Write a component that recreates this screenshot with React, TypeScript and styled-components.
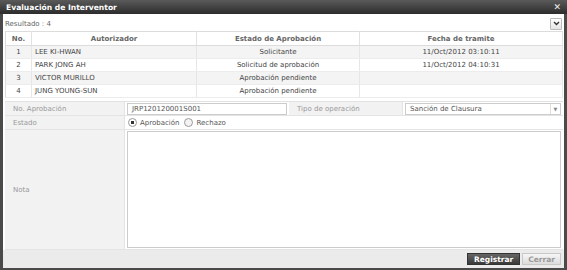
import React from 'react';
import styled, {createGlobalStyle} from 'styled-components';

const GlobalStyle = createGlobalStyle`
  html, body { margin: 0; padding: 0; background: #fff; }
  body { font-family: "DejaVu Sans", Verdana, sans-serif; font-size: 7px; color: #444; }
  * { box-sizing: border-box; }
`;

const Dialog = styled.div`
  width: 567px;
  height: 270px;
  display: flex;
  flex-direction: column;
  background: #fff;
  border: solid #4a4a4a;
  border-width: 0 3px 2px 3px;
`;

const TitleBar = styled.div`
  height: 14px;
  margin: 0 -3px;
  padding: 0 6px;
  display: flex;
  align-items: center;
  justify-content: space-between;
  background: linear-gradient(#5a5a5a, #2c2c2c);
  color: #fff;
  font-weight: bold;
  font-size: 7.6px;
`;

const Close = styled.span`
  font-size: 9px;
  font-weight: bold;
  line-height: 1;
  color: #eee;
`;

const Body = styled.div`
  flex: 1;
  padding: 2px 2px 0 1px;
  display: flex;
  flex-direction: column;
`;

const ResultBar = styled.div`
  height: 15px;
  display: flex;
  align-items: center;
  justify-content: space-between;
  color: #666;
  padding-left: 1px;
`;

const IconButton = styled.span`
  width: 12px;
  height: 12px;
  border: 1px solid #bbb;
  border-radius: 1px;
  background: linear-gradient(#fff, #e4e4e4);
  display: flex;
  align-items: center;
  justify-content: center;
`;

const Table = styled.table`
  width: 558px;
  margin-left: 1px;
  border-collapse: collapse;
  border: 1px solid #dcdcdc;
  table-layout: fixed;
`;

const Th = styled.th<{w?: number}>`
  width: ${p => (p.w ? p.w + 'px' : 'auto')};
  height: 14px;
  padding: 0;
  font-weight: bold;
  color: #666;
  border-right: 1px solid #e2e2e2;
  border-bottom: 1px solid #dcdcdc;
  background: #fff;
`;

const Tr = styled.tr<{alt?: boolean}>`
  background: ${p => (p.alt ? '#f4f4f4' : '#fff')};
`;

const Td = styled.td<{align?: string}>`
  height: 13px;
  padding: 0 3px;
  text-align: ${p => p.align || 'center'};
  color: #444;
  border-right: 1px solid #e6e6e6;
  border-bottom: 1px solid #ececec;
  white-space: nowrap;
`;

const Form = styled.div`
  margin: 3px 0 0 1px;
  width: 558px;
  flex: 1;
  display: grid;
  grid-template-columns: 120px 164px 114px 160px;
  grid-template-rows: 14px 14px 1fr;
  border-top: 1px solid #e2e2e2;
`;

const Label = styled.div`
  background: #f2f2f2;
  color: #999;
  display: flex;
  align-items: center;
  padding-left: 8px;
  border-bottom: 1px solid #e4e4e4;
  border-right: 1px solid #e4e4e4;
`;

const Cell = styled.div<{span?: number}>`
  grid-column: span ${p => p.span || 1};
  display: flex;
  align-items: center;
  padding: 1px 2px;
  border-bottom: 1px solid #e4e4e4;
`;

const Input = styled.div`
  flex: 1;
  height: 12px;
  border: 1px solid #ccc;
  background: #fff;
  color: #555;
  padding-left: 4px;
  display: flex;
  align-items: center;
`;

const Select = styled(Input)`
  justify-content: space-between;
  padding-right: 0;
`;

const SelectArrow = styled.span`
  width: 10px;
  height: 10px;
  display: flex;
  align-items: center;
  justify-content: center;
  border-left: 1px solid #ddd;
  color: #888;
  font-size: 5px;
`;

const Radio = styled.label<{checked?: boolean}>`
  display: flex;
  align-items: center;
  gap: 3px;
  margin-left: 1px;
  margin-right: 4px;
  color: #555;
  &::before {
    content: '';
    width: 7px;
    height: 7px;
    border-radius: 50%;
    border: 1px solid #999;
    background: ${p => (p.checked ? 'radial-gradient(#333 0 1.6px, #fff 2px)' : '#f4f4f4')};
  }
`;

const TextArea = styled.div`
  width: 100%;
  height: 100%;
  border: 1px solid #ccc;
  background: #fff;
`;

const Footer = styled.div`
  height: 18px;
  margin: 0 -2px 0 -1px;
  background: #ebebeb;
  display: flex;
  align-items: center;
  justify-content: flex-end;
  gap: 2px;
  padding-right: 3px;
`;

const Button = styled.span<{primary?: boolean}>`
  height: 12px;
  padding: 0 ${p => (p.primary ? 6 : 5)}px;
  display: flex;
  align-items: center;
  font-weight: bold;
  font-size: 7.5px;
  border: 1px solid ${p => (p.primary ? '#333' : '#c8c8c8')};
  background: ${p => (p.primary ? 'linear-gradient(#666, #3a3a3a)' : 'linear-gradient(#f6f6f6, #dcdcdc)')};
  color: ${p => (p.primary ? '#fff' : '#999')};
`;

const rows = [
  {no: 1, name: 'LEE KI-HWAN', estado: 'Solicitante', fecha: '11/Oct/2012 03:10:11'},
  {no: 2, name: 'PARK JONG AH', estado: 'Solicitud de aprobación', fecha: '11/Oct/2012 04:10:31'},
  {no: 3, name: 'VICTOR MURILLO', estado: 'Aprobación pendiente', fecha: ''},
  {no: 4, name: 'JUNG YOUNG-SUN', estado: 'Aprobación pendiente', fecha: ''},
];

export default function App() {
  return (
    <>
      <GlobalStyle/>
      <Dialog>
        <TitleBar>
          <span>Evaluación de Interventor</span>
          <Close>✕</Close>
        </TitleBar>
        <Body>
          <ResultBar>
            <span>Resultado : 4</span>
            <IconButton>
              <svg width="7" height="5" viewBox="0 0 7 5">
                <path d="M1 1 L3.5 3.5 L6 1" stroke="#333" strokeWidth="1.4" fill="none"/>
              </svg>
            </IconButton>
          </ResultBar>
          <Table>
            <thead>
              <tr>
                <Th w={26}>No.</Th>
                <Th w={165}>Autorizador</Th>
                <Th w={163}>Estado de Aprobación</Th>
                <Th>Fecha de tramite</Th>
              </tr>
            </thead>
            <tbody>
              {rows.map((r, i) => (
                <Tr key={r.no} alt={i % 2 === 0}>
                  <Td>{r.no}</Td>
                  <Td align="left">{r.name}</Td>
                  <Td>{r.estado}</Td>
                  <Td>{r.fecha}</Td>
                </Tr>
              ))}
            </tbody>
          </Table>
          <Form>
            <Label>No. Aprobación</Label>
            <Cell><Input>JRP120120001S001</Input></Cell>
            <Label>Tipo de operación</Label>
            <Cell>
              <Select>
                <span>Sanción de Clausura</span>
                <SelectArrow>▼</SelectArrow>
              </Select>
            </Cell>
            <Label>Estado</Label>
            <Cell span={3}>
              <Radio checked>Aprobación</Radio>
              <Radio>Rechazo</Radio>
            </Cell>
            <Label>Nota</Label>
            <Cell span={3}><TextArea/></Cell>
          </Form>
          <Footer>
            <Button primary>Registrar</Button>
            <Button>Cerrar</Button>
          </Footer>
        </Body>
      </Dialog>
    </>
  );
}
